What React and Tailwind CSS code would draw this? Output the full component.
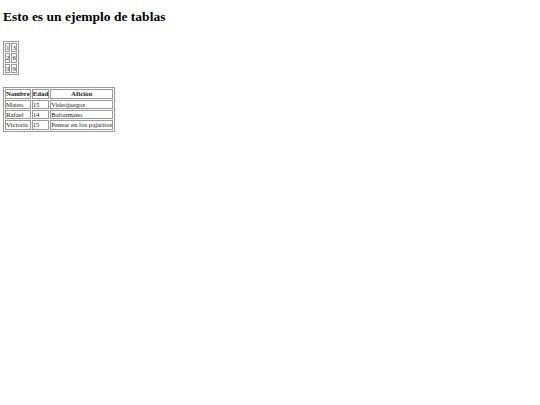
import React from "react";

const cell = "border border-[#9a9a9a] p-0 leading-[7.4px]";

export default function App() {
  const small = [
    ["1", "3"],
    ["2", "6"],
    ["3", "9"],
  ];
  const people = [
    ["Mateo", "15", "Videojuegos"],
    ["Rafael", "14", "Balonmano"],
    ["Victoria", "15", "Pensar en los pajaritos"],
  ];
  return (
    <div className="min-h-[405px] bg-white px-[3px] py-[4px] text-black font-['Liberation_Serif',serif]">
      <h1 className="text-[13.5px] font-bold leading-[16px] mt-[5px] mb-[16px]">
        Esto es un ejemplo de tablas
      </h1>
      <table className="border border-[#9a9a9a] border-separate border-spacing-[1px] text-[6.8px] text-[#222]">
        <tbody>
          {small.map((r, i) => (
            <tr key={i}>
              {r.map((c, j) => (
                <td key={j} className={cell}>
                  {c}
                </td>
              ))}
            </tr>
          ))}
        </tbody>
      </table>
      <div className="h-[12px]" />
      <table className="border border-[#9a9a9a] border-separate border-spacing-[1px] text-[6.8px] text-[#222]">
        <thead>
          <tr>
            <th className={cell + " font-bold"}>Nombre</th>
            <th className={cell + " font-bold"}>Edad</th>
            <th className={cell + " font-bold"}>Afición</th>
          </tr>
        </thead>
        <tbody>
          {people.map((r, i) => (
            <tr key={i}>
              {r.map((c, j) => (
                <td key={j} className={cell + " text-left"}>
                  {c}
                </td>
              ))}
            </tr>
          ))}
        </tbody>
      </table>
    </div>
  );
}
